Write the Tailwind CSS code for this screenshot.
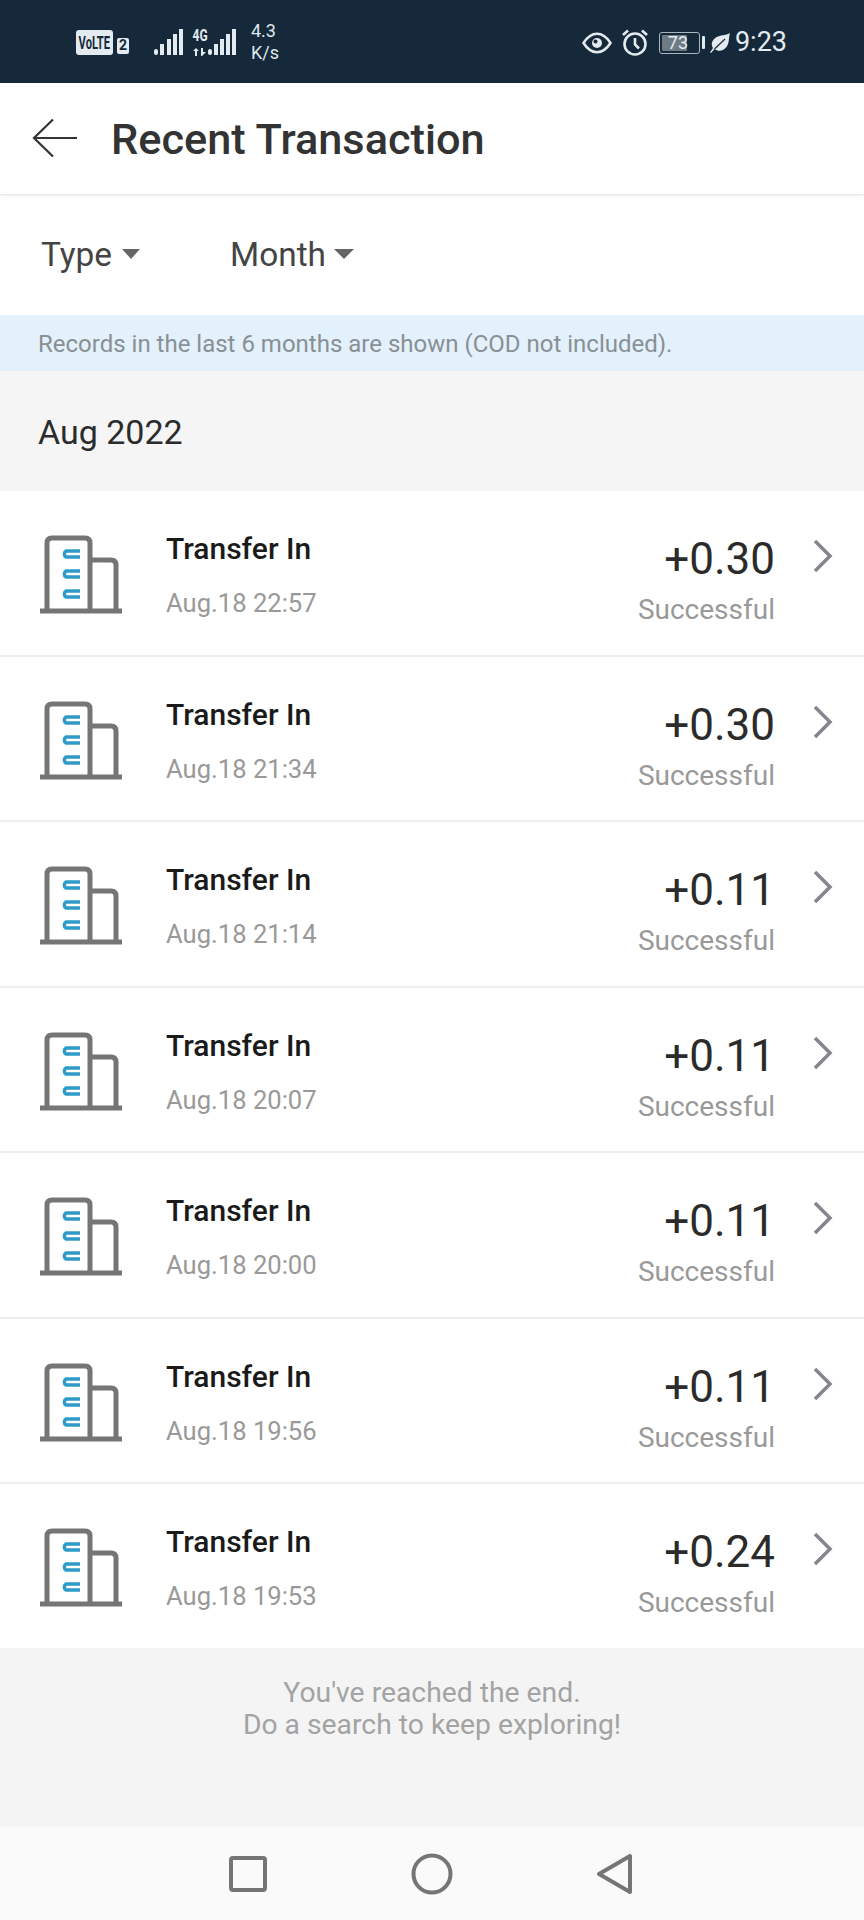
<!DOCTYPE html>
<html lang="en">
<head>
<meta charset="utf-8">
<title>Recent Transaction</title>
<script src="https://cdn.jsdelivr.net/npm/@tailwindcss/browser@4"></script>
</head>
<body class="bg-white font-['Roboto',sans-serif]">
<div class="w-[864px] h-[1920px] flex flex-col overflow-hidden bg-white">

  <div class="h-[83px] shrink-0 bg-[#15293a] flex items-center text-[#e3ebf0] relative">
    <div class="ml-[76px] w-[37px] h-[25px] rounded-[3px] bg-[#e3ebf0] flex items-center justify-center text-[#15293a] text-[18px] font-bold mt-[1px] overflow-hidden"><span class="scale-x-[0.62] whitespace-nowrap">VoLTE</span></div>
    <div class="ml-[4px] w-[12px] h-[16px] rounded-[2px] bg-[#e3ebf0] flex items-center justify-center text-[#15293a] text-[14px] font-bold mt-[8px]">2</div>
    <svg class="ml-[25px] mt-[1px]" width="29" height="26" viewBox="0 0 29 26" fill="#e3ebf0"><rect x="0" y="20" width="4" height="6" rx="2"/><rect x="6" y="15" width="4" height="11"/><rect x="13" y="10" width="4" height="16"/><rect x="19" y="5" width="4" height="21"/><rect x="25" y="0" width="4" height="26"/></svg>
    <div class="ml-[9px] w-[16px] flex flex-col items-center text-[16px] leading-[14px] font-bold mt-[1px]">
      <span class="scale-x-75 whitespace-nowrap">4G</span>
      <svg class="mt-[5px]" width="15" height="8" viewBox="0 0 15 8" fill="#e3ebf0"><path d="M0 3l3-3 3 3H4v5H2V3zM8 0h2v4h3L9 8H8z"/></svg>
    </div>
    <svg class="mt-[1px]" width="28" height="26" viewBox="0 0 28 26" fill="#e3ebf0"><rect x="0" y="20" width="4" height="6" rx="2"/><rect x="6" y="15" width="4" height="11"/><rect x="12" y="10" width="4" height="16"/><rect x="18" y="5" width="4" height="21"/><rect x="24" y="0" width="4" height="26"/></svg>
    <div class="ml-[15px] flex flex-col text-[18px] leading-[22px] text-[#dfe7ec] mt-[1px]"><span>4.3</span><span>K/s</span></div>

    <div class="ml-auto flex items-center mt-[2px]">
      <svg width="30" height="22" viewBox="0 0 30 22" fill="none" stroke="#e3ebf0" stroke-width="2.600"><path d="M1.500 11C6 4 10 1.800 15 1.800S24 4 28.500 11C24 18 20 20.200 15 20.200S6 18 1.500 11Z"/><circle cx="15" cy="11" r="5" fill="#e3ebf0" stroke="none"/><circle cx="13.500" cy="9.500" r="2" fill="#15293a" stroke="none"/></svg>
      <svg class="ml-[9px]" width="28" height="27" viewBox="0 0 28 27" fill="none" stroke="#e3ebf0" stroke-width="2.600"><circle cx="14" cy="15" r="10.500"/><path d="M14 9v6.500l4 4M2 6l5-4.500M26 6l-5-4.500"/></svg>
      <div class="ml-[10px] w-[41px] h-[22px] rounded-[3px] border border-[#a9b6bf] p-[2px] relative">
        <div class="h-full w-[72%] bg-[#6f7b84] rounded-[1px]"></div>
        <span class="absolute inset-0 flex items-center justify-center text-[18px] leading-none text-[#e3ebf0] pr-[3px]">73</span>
      </div>
      <div class="ml-[2px] w-[3px] h-[13px] bg-[#e3ebf0] rounded-[1px]"></div>
      <svg class="ml-[5px]" width="20" height="20" viewBox="0 0 20 20"><path fill="#e3ebf0" d="M20 0C17 2 12 2 8 3.500 3 5.500 0 10 3 15l-3 4.500 1 .5 3.500-4c4 3 9 2 12-2 3-4 2-9 3.500-14z"/><path fill="none" stroke="#15293a" stroke-width="1.200" d="M4.500 16L15 6"/></svg>
      <span class="ml-[5px] mr-[77px] text-[27px] leading-none text-[#e3ebf0]">9:23</span>
    </div>
  </div>

  <div class="h-[111px] shrink-0 bg-white flex items-center shadow-[0_1px_3px_rgba(0,0,0,0.14)] relative z-10">
    <svg class="ml-[32px] mt-[-2px]" width="46" height="40" viewBox="0 0 46 40" fill="none" stroke="#333" stroke-width="2.200"><path d="M21 1.500L2 20l19 18.500M2 20h43"/></svg>
    <h1 class="ml-[33px] mt-[3px] text-[43.300px] leading-none font-medium text-[#333]">Recent Transaction</h1>
  </div>

  <div class="h-[121px] shrink-0 bg-white flex items-center pt-[2px] text-[33.400px] text-[#444]">
    <span class="ml-[41px]">Type</span>
    <span class="ml-[10px] mb-[3px] w-0 h-0 border-x-[9px] border-x-transparent border-t-[10px] border-t-[#666]"></span>
    <span class="ml-[90px]">Month</span>
    <span class="ml-[8px] mb-[3px] w-0 h-0 border-x-[10px] border-x-transparent border-t-[10px] border-t-[#666]"></span>
  </div>

  <div class="h-[56px] shrink-0 bg-[#e2f1fb] flex items-center pl-[38px] pt-[2px] text-[24px] text-[#8a8f94]">Records in the last 6 months are shown (COD not included).</div>

  <div class="h-[120px] shrink-0 bg-[#f5f5f5] flex items-center pl-[38px] pt-[2px] text-[34px] text-[#2b2b2b]">Aug 2022</div>

  <div class="h-[165.5px] shrink-0 flex bg-white border-b-2 border-[#eeeeee]">
    <svg class="ml-[40px] mt-[44px]" width="82" height="80" viewBox="0 0 82 80" fill="none"><path d="M0 76h82" stroke="#757575" stroke-width="5"/><path d="M7 76V8q0-5 5-5h33q5 0 5 5v68M50 25h21q5 0 5 5v46" stroke="#757575" stroke-width="5"/><path d="M40 16H26a3.500 3.500 0 0 0 0 6h14M40 36H26a3.500 3.500 0 0 0 0 6h14M40 56H26a3.500 3.500 0 0 0 0 6h14" stroke="#2f9bc8" stroke-width="3.500"/></svg>
    <div class="ml-[44px] mt-[41px] flex flex-col">
      <span class="text-[30px] leading-[34px] font-medium text-[#1a1a1a]">Transfer In</span>
      <span class="mt-[20px] text-[25.600px] leading-[34px] text-[#999]">Aug.18 22:57</span>
    </div>
    <div class="ml-auto mt-[45px] flex flex-col items-end">
      <span class="text-[44px] leading-[46px] text-[#2b2b2b]">+0.30</span>
      <span class="mt-[11px] text-[28px] leading-[34px] text-[#999]">Successful</span>
    </div>
    <svg class="ml-[38px] mr-[31px] mt-[48px]" width="20" height="34" viewBox="0 0 20 34" fill="none" stroke="#85858f" stroke-width="3.500"><path d="M2 2l15 15L2 32"/></svg>
  </div>
  <div class="h-[165.5px] shrink-0 flex bg-white border-b-2 border-[#eeeeee]">
    <svg class="ml-[40px] mt-[44px]" width="82" height="80" viewBox="0 0 82 80" fill="none"><path d="M0 76h82" stroke="#757575" stroke-width="5"/><path d="M7 76V8q0-5 5-5h33q5 0 5 5v68M50 25h21q5 0 5 5v46" stroke="#757575" stroke-width="5"/><path d="M40 16H26a3.500 3.500 0 0 0 0 6h14M40 36H26a3.500 3.500 0 0 0 0 6h14M40 56H26a3.500 3.500 0 0 0 0 6h14" stroke="#2f9bc8" stroke-width="3.500"/></svg>
    <div class="ml-[44px] mt-[41px] flex flex-col">
      <span class="text-[30px] leading-[34px] font-medium text-[#1a1a1a]">Transfer In</span>
      <span class="mt-[20px] text-[25.600px] leading-[34px] text-[#999]">Aug.18 21:34</span>
    </div>
    <div class="ml-auto mt-[45px] flex flex-col items-end">
      <span class="text-[44px] leading-[46px] text-[#2b2b2b]">+0.30</span>
      <span class="mt-[11px] text-[28px] leading-[34px] text-[#999]">Successful</span>
    </div>
    <svg class="ml-[38px] mr-[31px] mt-[48px]" width="20" height="34" viewBox="0 0 20 34" fill="none" stroke="#85858f" stroke-width="3.500"><path d="M2 2l15 15L2 32"/></svg>
  </div>
  <div class="h-[165.5px] shrink-0 flex bg-white border-b-2 border-[#eeeeee]">
    <svg class="ml-[40px] mt-[44px]" width="82" height="80" viewBox="0 0 82 80" fill="none"><path d="M0 76h82" stroke="#757575" stroke-width="5"/><path d="M7 76V8q0-5 5-5h33q5 0 5 5v68M50 25h21q5 0 5 5v46" stroke="#757575" stroke-width="5"/><path d="M40 16H26a3.500 3.500 0 0 0 0 6h14M40 36H26a3.500 3.500 0 0 0 0 6h14M40 56H26a3.500 3.500 0 0 0 0 6h14" stroke="#2f9bc8" stroke-width="3.500"/></svg>
    <div class="ml-[44px] mt-[41px] flex flex-col">
      <span class="text-[30px] leading-[34px] font-medium text-[#1a1a1a]">Transfer In</span>
      <span class="mt-[20px] text-[25.600px] leading-[34px] text-[#999]">Aug.18 21:14</span>
    </div>
    <div class="ml-auto mt-[45px] flex flex-col items-end">
      <span class="text-[44px] leading-[46px] text-[#2b2b2b]">+0.11</span>
      <span class="mt-[11px] text-[28px] leading-[34px] text-[#999]">Successful</span>
    </div>
    <svg class="ml-[38px] mr-[31px] mt-[48px]" width="20" height="34" viewBox="0 0 20 34" fill="none" stroke="#85858f" stroke-width="3.500"><path d="M2 2l15 15L2 32"/></svg>
  </div>
  <div class="h-[165.5px] shrink-0 flex bg-white border-b-2 border-[#eeeeee]">
    <svg class="ml-[40px] mt-[44px]" width="82" height="80" viewBox="0 0 82 80" fill="none"><path d="M0 76h82" stroke="#757575" stroke-width="5"/><path d="M7 76V8q0-5 5-5h33q5 0 5 5v68M50 25h21q5 0 5 5v46" stroke="#757575" stroke-width="5"/><path d="M40 16H26a3.500 3.500 0 0 0 0 6h14M40 36H26a3.500 3.500 0 0 0 0 6h14M40 56H26a3.500 3.500 0 0 0 0 6h14" stroke="#2f9bc8" stroke-width="3.500"/></svg>
    <div class="ml-[44px] mt-[41px] flex flex-col">
      <span class="text-[30px] leading-[34px] font-medium text-[#1a1a1a]">Transfer In</span>
      <span class="mt-[20px] text-[25.600px] leading-[34px] text-[#999]">Aug.18 20:07</span>
    </div>
    <div class="ml-auto mt-[45px] flex flex-col items-end">
      <span class="text-[44px] leading-[46px] text-[#2b2b2b]">+0.11</span>
      <span class="mt-[11px] text-[28px] leading-[34px] text-[#999]">Successful</span>
    </div>
    <svg class="ml-[38px] mr-[31px] mt-[48px]" width="20" height="34" viewBox="0 0 20 34" fill="none" stroke="#85858f" stroke-width="3.500"><path d="M2 2l15 15L2 32"/></svg>
  </div>
  <div class="h-[165.5px] shrink-0 flex bg-white border-b-2 border-[#eeeeee]">
    <svg class="ml-[40px] mt-[44px]" width="82" height="80" viewBox="0 0 82 80" fill="none"><path d="M0 76h82" stroke="#757575" stroke-width="5"/><path d="M7 76V8q0-5 5-5h33q5 0 5 5v68M50 25h21q5 0 5 5v46" stroke="#757575" stroke-width="5"/><path d="M40 16H26a3.500 3.500 0 0 0 0 6h14M40 36H26a3.500 3.500 0 0 0 0 6h14M40 56H26a3.500 3.500 0 0 0 0 6h14" stroke="#2f9bc8" stroke-width="3.500"/></svg>
    <div class="ml-[44px] mt-[41px] flex flex-col">
      <span class="text-[30px] leading-[34px] font-medium text-[#1a1a1a]">Transfer In</span>
      <span class="mt-[20px] text-[25.600px] leading-[34px] text-[#999]">Aug.18 20:00</span>
    </div>
    <div class="ml-auto mt-[45px] flex flex-col items-end">
      <span class="text-[44px] leading-[46px] text-[#2b2b2b]">+0.11</span>
      <span class="mt-[11px] text-[28px] leading-[34px] text-[#999]">Successful</span>
    </div>
    <svg class="ml-[38px] mr-[31px] mt-[48px]" width="20" height="34" viewBox="0 0 20 34" fill="none" stroke="#85858f" stroke-width="3.500"><path d="M2 2l15 15L2 32"/></svg>
  </div>
  <div class="h-[165.5px] shrink-0 flex bg-white border-b-2 border-[#eeeeee]">
    <svg class="ml-[40px] mt-[44px]" width="82" height="80" viewBox="0 0 82 80" fill="none"><path d="M0 76h82" stroke="#757575" stroke-width="5"/><path d="M7 76V8q0-5 5-5h33q5 0 5 5v68M50 25h21q5 0 5 5v46" stroke="#757575" stroke-width="5"/><path d="M40 16H26a3.500 3.500 0 0 0 0 6h14M40 36H26a3.500 3.500 0 0 0 0 6h14M40 56H26a3.500 3.500 0 0 0 0 6h14" stroke="#2f9bc8" stroke-width="3.500"/></svg>
    <div class="ml-[44px] mt-[41px] flex flex-col">
      <span class="text-[30px] leading-[34px] font-medium text-[#1a1a1a]">Transfer In</span>
      <span class="mt-[20px] text-[25.600px] leading-[34px] text-[#999]">Aug.18 19:56</span>
    </div>
    <div class="ml-auto mt-[45px] flex flex-col items-end">
      <span class="text-[44px] leading-[46px] text-[#2b2b2b]">+0.11</span>
      <span class="mt-[11px] text-[28px] leading-[34px] text-[#999]">Successful</span>
    </div>
    <svg class="ml-[38px] mr-[31px] mt-[48px]" width="20" height="34" viewBox="0 0 20 34" fill="none" stroke="#85858f" stroke-width="3.500"><path d="M2 2l15 15L2 32"/></svg>
  </div>
  <div class="h-[164px] shrink-0 flex bg-white">
    <svg class="ml-[40px] mt-[44px]" width="82" height="80" viewBox="0 0 82 80" fill="none"><path d="M0 76h82" stroke="#757575" stroke-width="5"/><path d="M7 76V8q0-5 5-5h33q5 0 5 5v68M50 25h21q5 0 5 5v46" stroke="#757575" stroke-width="5"/><path d="M40 16H26a3.500 3.500 0 0 0 0 6h14M40 36H26a3.500 3.500 0 0 0 0 6h14M40 56H26a3.500 3.500 0 0 0 0 6h14" stroke="#2f9bc8" stroke-width="3.500"/></svg>
    <div class="ml-[44px] mt-[41px] flex flex-col">
      <span class="text-[30px] leading-[34px] font-medium text-[#1a1a1a]">Transfer In</span>
      <span class="mt-[20px] text-[25.600px] leading-[34px] text-[#999]">Aug.18 19:53</span>
    </div>
    <div class="ml-auto mt-[45px] flex flex-col items-end">
      <span class="text-[44px] leading-[46px] text-[#2b2b2b]">+0.24</span>
      <span class="mt-[11px] text-[28px] leading-[34px] text-[#999]">Successful</span>
    </div>
    <svg class="ml-[38px] mr-[31px] mt-[48px]" width="20" height="34" viewBox="0 0 20 34" fill="none" stroke="#85858f" stroke-width="3.500"><path d="M2 2l15 15L2 32"/></svg>
  </div>

  <div class="flex-1 bg-[#f4f4f4] pt-[29px] text-center text-[28.300px] leading-[32px] text-[#a3a3a3]">
    <p>You've reached the end.</p>
    <p>Do a search to keep exploring!</p>
  </div>

  <div class="h-[93px] shrink-0 bg-[#fafafa] flex items-center pl-[229px]">
    <svg width="38" height="36" viewBox="0 0 38 36" fill="none" stroke="#757575" stroke-width="4"><rect x="2" y="2" width="34" height="32" rx="2"/></svg>
    <svg class="ml-[144px]" width="42" height="42" viewBox="0 0 42 42" fill="none" stroke="#757575" stroke-width="4"><circle cx="21" cy="21" r="18.500"/></svg>
    <svg class="ml-[143px]" width="36" height="42" viewBox="0 0 36 42" fill="none" stroke="#757575" stroke-width="4" stroke-linejoin="round"><path d="M34 3v36L3 21z"/></svg>
  </div>
</div>
</body>
</html>
